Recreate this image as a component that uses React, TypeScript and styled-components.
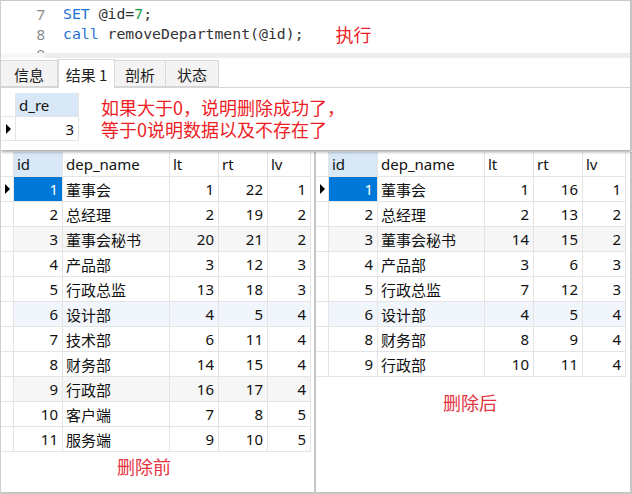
import React from "react";
import styled, { createGlobalStyle } from "styled-components";

const GlobalStyle = createGlobalStyle`
  html, body { margin: 0; padding: 0; background: #ffffff; }
  body { font-family: "Noto Sans", "Noto Sans CJK SC", sans-serif; }
  * { box-sizing: border-box; }
`;

const SANS = `"Noto Sans", "Noto Sans CJK SC", sans-serif`;
const CJK = `"Noto Sans CJK SC", "Noto Sans", sans-serif`;
const MONO = `"DejaVu Sans Mono", "Liberation Mono", "Noto Sans CJK SC", monospace`;

const Frame = styled.div`
  width: 632px;
  height: 494px;
  overflow: hidden;
  display: flex;
  flex-direction: column;
  border-left: 1px solid #cfcfcf;
  background: #ffffff;
`;

const TopPanel = styled.div`
  position: relative;
  z-index: 2;
  height: 150px;
  flex: none;
  display: flex;
  flex-direction: column;
  background: #ffffff;
  border-top: 1px solid #c9c9c9;
  border-right: 2px solid #c4c4c4;
  box-shadow: 0 2px 3px rgba(0, 0, 0, 0.35);
`;

const Editor = styled.div`
  height: 52px;
  overflow: hidden;
  display: grid;
  grid-template-columns: 44px 1fr;
  padding-top: 3px;
  font-family: ${MONO};
  font-size: 14.8px;
  line-height: 20px;
`;

const Gutter = styled.div`
  display: flex;
  flex-direction: column;
  align-items: flex-end;
  color: #8a8a8a;
  font-family: ${SANS};
  font-size: 15px;
`;

const GutterNum = styled.div`
  height: 20px;
  line-height: 20px;
`;

const CodeCol = styled.div`
  padding-left: 18px;
  display: flex;
  flex-direction: column;
  color: #333333;
  white-space: pre;
`;

const CodeLine = styled.div`
  height: 20px;
  display: flex;
  align-items: center;
`;

const Tok = styled.span<{ $kind?: "kw" | "num" }>`
  color: ${(p) => (p.$kind === "kw" ? "#1f72d4" : p.$kind === "num" ? "#1f9a3a" : "#333333")};
`;

const ExecNote = styled.span`
  margin-left: 32px;
  font-family: ${CJK};
  font-size: 18px;
  color: #ee1c25;
`;

const ScrollStrip = styled.div`
  height: 5px;
  flex: none;
  background: linear-gradient(to right, #f7f7f7 0 44px, #ededed 44px);
`;

const TabBar = styled.div`
  height: 30px;
  flex: none;
  display: flex;
  align-items: flex-end;
  border-bottom: 1px solid #d6d6d6;
`;

const Tab = styled.div<{ $w: number; $active?: boolean }>`
  width: ${(p) => p.$w}px;
  height: ${(p) => (p.$active ? 29 : 27)}px;
  margin-bottom: ${(p) => (p.$active ? -1 : 0)}px;
  display: flex;
  align-items: center;
  justify-content: center;
  font-family: ${CJK};
  font-size: 15px;
  color: #1e1e1e;
  background: ${(p) => (p.$active ? "#ffffff" : "#f3f3f3")};
  border: 1px solid #d9d9d9;
  border-bottom: ${(p) => (p.$active ? "none" : "1px solid #d6d6d6")};
  border-left: ${(p) => (p.$active ? "1px solid #d9d9d9" : "none")};
  padding-top: ${(p) => (p.$active ? 0 : 2)}px;
`;

const ResultArea = styled.div`
  flex: 1;
  display: flex;
  align-items: flex-start;
  padding-top: 5px;
`;

const MiniGrid = styled.div`
  display: grid;
  grid-template-columns: 15px 63px;
  grid-auto-rows: 24px;
`;

const Note = styled.div`
  margin-left: 22px;
  margin-top: 3px;
  font-family: ${CJK};
  font-size: 18px;
  line-height: 22px;
  color: #ee1c25;
`;

const Lower = styled.div`
  flex: 1;
  display: flex;
  padding-top: 2px;
  min-height: 0;
`;

const Panel = styled.div<{ $w?: number }>`
  ${(p) => (p.$w ? `width: ${p.$w}px; flex: none;` : "flex: 1;")}
  display: flex;
  flex-direction: column;
  border-right: 2px solid #c6c6c6;
  border-bottom: 2px solid #c6c6c6;
`;

const Grid = styled.div<{ $ind: number }>`
  display: grid;
  grid-template-columns: ${(p) => p.$ind}px 49px 107px 49px 49px 43px;
  grid-auto-rows: 25px;
  width: fit-content;
`;

type Tone = "plain" | "alt" | "hover" | "sel" | "head" | "headSel";

const toneBg: Record<Tone, string> = {
  plain: "#ffffff",
  alt: "#f6f6f6",
  hover: "#f1f6fc",
  sel: "#0078d7",
  head: "#ffffff",
  headSel: "#d8e8f6",
};

const Cell = styled.div<{ $tone?: Tone; $right?: boolean }>`
  display: flex;
  align-items: center;
  justify-content: ${(p) => (p.$right ? "flex-end" : "flex-start")};
  padding: ${(p) => (p.$right ? "0 4px 0 0" : "0 0 0 3px")};
  background: ${(p) => toneBg[p.$tone || "plain"]};
  color: ${(p) => (p.$tone === "sel" ? "#ffffff" : "#111111")};
  border-right: 1px solid #e4e4e4;
  border-bottom: 1px solid #e4e4e4;
  font-family: ${SANS};
  font-size: 15px;
  white-space: nowrap;
  overflow: hidden;
`;

const IndCell = styled.div`
  display: flex;
  align-items: center;
  justify-content: center;
  background: #ffffff;
  border-right: 1px solid #e4e4e4;
  border-bottom: 1px solid #e4e4e4;
`;

const Pointer = styled.span`
  width: 0;
  height: 0;
  margin-left: 1px;
  border-top: 5px solid transparent;
  border-bottom: 5px solid transparent;
  border-left: 5px solid #000000;
`;

const Caption = styled.div<{ $indent: number; $gap: number }>`
  margin-top: ${(p) => p.$gap}px;
  padding-left: ${(p) => p.$indent}px;
  height: 28px;
  line-height: 28px;
  font-family: ${CJK};
  font-size: 18px;
  color: #e5333f;
`;

type Row = { id: number; name: string; lt: number; rt: number; lv: number; tone?: Tone };

const before: Row[] = [
  { id: 1, name: "董事会", lt: 1, rt: 22, lv: 1 },
  { id: 2, name: "总经理", lt: 2, rt: 19, lv: 2 },
  { id: 3, name: "董事会秘书", lt: 20, rt: 21, lv: 2, tone: "alt" },
  { id: 4, name: "产品部", lt: 3, rt: 12, lv: 3 },
  { id: 5, name: "行政总监", lt: 13, rt: 18, lv: 3 },
  { id: 6, name: "设计部", lt: 4, rt: 5, lv: 4, tone: "hover" },
  { id: 7, name: "技术部", lt: 6, rt: 11, lv: 4 },
  { id: 8, name: "财务部", lt: 14, rt: 15, lv: 4 },
  { id: 9, name: "行政部", lt: 16, rt: 17, lv: 4, tone: "alt" },
  { id: 10, name: "客户端", lt: 7, rt: 8, lv: 5 },
  { id: 11, name: "服务端", lt: 9, rt: 10, lv: 5 },
];

const after: Row[] = [
  { id: 1, name: "董事会", lt: 1, rt: 16, lv: 1 },
  { id: 2, name: "总经理", lt: 2, rt: 13, lv: 2 },
  { id: 3, name: "董事会秘书", lt: 14, rt: 15, lv: 2, tone: "alt" },
  { id: 4, name: "产品部", lt: 3, rt: 6, lv: 3 },
  { id: 5, name: "行政总监", lt: 7, rt: 12, lv: 3 },
  { id: 6, name: "设计部", lt: 4, rt: 5, lv: 4, tone: "hover" },
  { id: 8, name: "财务部", lt: 8, rt: 9, lv: 4 },
  { id: 9, name: "行政部", lt: 10, rt: 11, lv: 4 },
];

function DeptTable({ rows, ind }: { rows: Row[]; ind: number }) {
  return (
    <Grid $ind={ind}>
      <IndCell />
      <Cell $tone="headSel">id</Cell>
      <Cell $tone="head">dep_name</Cell>
      <Cell $tone="head">lt</Cell>
      <Cell $tone="head">rt</Cell>
      <Cell $tone="head">lv</Cell>
      {rows.map((r, i) => {
        const t: Tone = r.tone || "plain";
        return (
          <React.Fragment key={r.id}>
            <IndCell>{i === 0 ? <Pointer /> : null}</IndCell>
            <Cell $right $tone={i === 0 ? "sel" : t}>{r.id}</Cell>
            <Cell $tone={t}>{r.name}</Cell>
            <Cell $right $tone={t}>{r.lt}</Cell>
            <Cell $right $tone={t}>{r.rt}</Cell>
            <Cell $right $tone={t}>{r.lv}</Cell>
          </React.Fragment>
        );
      })}
    </Grid>
  );
}

export default function App() {
  return (
    <>
      <GlobalStyle />
      <Frame>
        <TopPanel>
          <Editor>
            <Gutter>
              <GutterNum>7</GutterNum>
              <GutterNum>8</GutterNum>
              <GutterNum>9</GutterNum>
            </Gutter>
            <CodeCol>
              <CodeLine>
                <Tok $kind="kw">SET</Tok>
                <Tok> @id=</Tok>
                <Tok $kind="num">7</Tok>
                <Tok>;</Tok>
              </CodeLine>
              <CodeLine>
                <Tok $kind="kw">call</Tok>
                <Tok> removeDepartment(@id);</Tok>
                <ExecNote>执行</ExecNote>
              </CodeLine>
              <CodeLine />
            </CodeCol>
          </Editor>
          <ScrollStrip />
          <TabBar>
            <Tab $w={57}>信息</Tab>
            <Tab $w={57} $active>结果 1</Tab>
            <Tab $w={51}>剖析</Tab>
            <Tab $w={53}>状态</Tab>
          </TabBar>
          <ResultArea>
            <MiniGrid>
              <IndCell />
              <Cell $tone="headSel">d_re</Cell>
              <IndCell>
                <Pointer />
              </IndCell>
              <Cell $right>3</Cell>
            </MiniGrid>
            <Note>
              <div>如果大于0，说明删除成功了，</div>
              <div>等于0说明数据以及不存在了</div>
            </Note>
          </ResultArea>
        </TopPanel>
        <Lower>
          <Panel $w={315}>
            <DeptTable rows={before} ind={13} />
            <Caption $indent={116} $gap={0}>删除前</Caption>
          </Panel>
          <Panel>
            <DeptTable rows={after} ind={13} />
            <Caption $indent={127} $gap={11}>删除后</Caption>
          </Panel>
        </Lower>
      </Frame>
    </>
  );
}
